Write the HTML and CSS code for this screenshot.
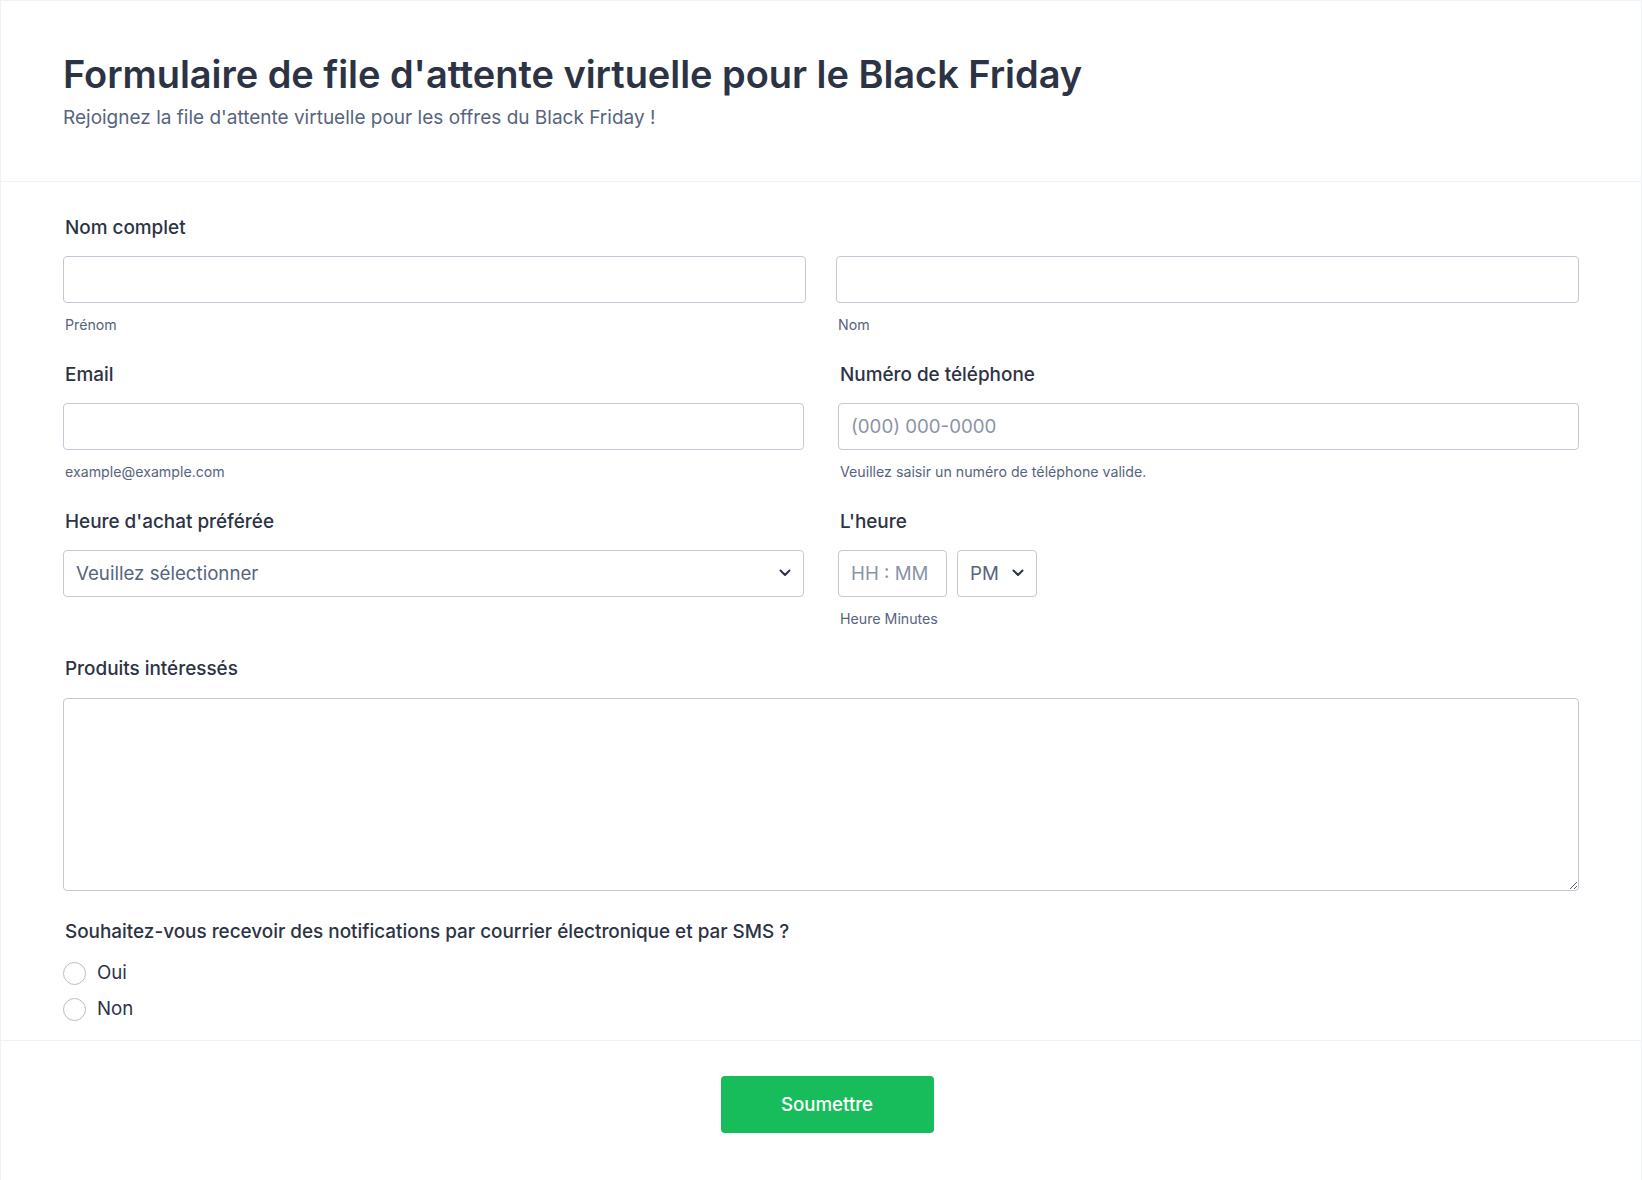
FILE: index.html
```html
<!DOCTYPE html>
<html lang="fr">
<head>
<meta charset="utf-8">
<title>Formulaire de file d'attente virtuelle pour le Black Friday</title>
<link rel="stylesheet" href="styles.css">
</head>
<body>
<div class="card">
  <header class="header">
    <h1 class="title">Formulaire de file d'attente virtuelle pour le Black Friday</h1>
    <p class="subtitle">Rejoignez la file d'attente virtuelle pour les offres du Black Friday !</p>
  </header>

  <section class="form">
    <div class="field">
      <div class="label">Nom complet</div>
      <div class="row row-name">
        <div class="col">
          <div class="input"></div>
          <div class="sublabel">Prénom</div>
        </div>
        <div class="col">
          <div class="input"></div>
          <div class="sublabel">Nom</div>
        </div>
      </div>
    </div>

    <div class="row">
      <div class="field">
        <div class="label">Email</div>
        <div class="input"></div>
        <div class="sublabel">example@example.com</div>
      </div>
      <div class="field">
        <div class="label">Numéro de téléphone</div>
        <div class="input"><span class="placeholder">(000) 000-0000</span></div>
        <div class="sublabel">Veuillez saisir un numéro de téléphone valide.</div>
      </div>
    </div>

    <div class="row">
      <div class="field">
        <div class="label">Heure d'achat préférée</div>
        <div class="input select"><span class="value">Veuillez sélectionner</span>
          <svg class="chev" width="12" height="8" viewBox="0 0 12 8"><path d="M1.5 1.5 L6 6 L10.5 1.5" fill="none" stroke="#2c3345" stroke-width="2" stroke-linecap="round" stroke-linejoin="round"/></svg>
        </div>
      </div>
      <div class="field">
        <div class="label">L'heure</div>
        <div class="time">
          <div class="input hhmm"><span class="placeholder">HH : MM</span></div>
          <div class="input select ampm"><span class="value">PM</span>
            <svg class="chev" width="12" height="8" viewBox="0 0 12 8"><path d="M1.5 1.5 L6 6 L10.5 1.5" fill="none" stroke="#2c3345" stroke-width="2" stroke-linecap="round" stroke-linejoin="round"/></svg>
          </div>
        </div>
        <div class="sublabel">Heure Minutes</div>
      </div>
    </div>

    <div class="field field-text">
      <div class="label">Produits intéressés</div>
      <textarea class="textarea"></textarea>
    </div>

    <div class="field field-last">
      <div class="label">Souhaitez-vous recevoir des notifications par courrier électronique et par SMS ?</div>
      <div class="radios">
        <div class="radio"><span class="circle"></span><span class="radio-text">Oui</span></div>
        <div class="radio"><span class="circle"></span><span class="radio-text">Non</span></div>
      </div>
    </div>
  </section>

  <footer class="footer">
    <button class="submit" type="button">Soumettre</button>
  </footer>
</div>
</body>
</html>
```

FILE: styles.css
```css
* { box-sizing: border-box; }
html, body {
  margin: 0;
  padding: 0;
  background: #ffffff;
}
body {
  font-family: Inter, "Noto Sans", sans-serif;
  color: #2c3345;
}
.card {
  width: 1642px;
  min-height: 1182px;
  border: 1px solid #f1f2f8;
  background: #fff;
}
.header {
  padding: 50px 62px 50px 62px;
  border-bottom: 1px solid #f0f1f8;
}
.title {
  margin: 0;
  font-size: 38px;
  line-height: 46px;
  font-weight: 600;
  color: #2c3345;
  letter-spacing: -0.05px;
}
.subtitle {
  margin: 8px 0 0 0;
  font-size: 19px;
  line-height: 26px;
  color: #57647e;
}
.form {
  padding: 34px 62px 13px 62px;
  display: flex;
  flex-direction: column;
  gap: 29px;
}
.row {
  display: grid;
  grid-template-columns: 1fr 1fr;
  column-gap: 34px;
}
.row-name {
  column-gap: 30px;
}
.field {
  display: flex;
  flex-direction: column;
}
.col {
  display: flex;
  flex-direction: column;
}
.label {
  font-size: 18.9px;
  line-height: 24px;
  font-weight: 500;
  color: #2c3345;
  padding-left: 2px;
  margin-bottom: 15.5px;
}
.input {
  height: 47px;
  border: 1px solid #c3c8d4;
  border-radius: 4px;
  background: #fff;
  display: flex;
  align-items: center;
  padding: 0 12px;
  font-size: 18.7px;
}
.placeholder {
  color: #8a93a8;
}
.value {
  color: #57647e;
}
.select {
  justify-content: space-between;
}
.sublabel {
  margin-top: 13.5px;
  font-size: 14.2px;
  line-height: 18px;
  color: #57647e;
  padding-left: 2px;
}
.time {
  display: flex;
  gap: 10px;
}
.hhmm {
  width: 109px;
}
.ampm {
  width: 80px;
  padding-right: 12px;
}
.field-text .label {
  margin-bottom: 16.5px;
}
.textarea {
  display: block;
  width: 100%;
  height: 193px;
  border: 1px solid #c3c8d4;
  border-radius: 4px;
  resize: vertical;
  font-family: inherit;
  font-size: 18.7px;
  padding: 12px;
  margin: 0;
}
.field-last .label {
  margin-bottom: 11.5px;
}
.radios {
  display: flex;
  flex-direction: column;
}
.radio {
  height: 36px;
  display: flex;
  align-items: center;
  gap: 11px;
}
.circle {
  width: 23px;
  height: 23px;
  border-radius: 50%;
  border: 1px solid #b8bdc9;
  background: #fff;
  flex: none;
}
.radio-text {
  font-size: 18.7px;
  line-height: 24px;
  color: #2c3345;
}
.footer {
  border-top: 1px solid #f0f1f8;
  padding: 35px 62px 40px 74px;
  display: flex;
  justify-content: center;
}
.submit {
  width: 213px;
  height: 57px;
  border: none;
  border-radius: 4px;
  background: #18bd5b;
  color: #fff;
  font-family: Inter, "Noto Sans", sans-serif;
  font-size: 18.7px;
  font-weight: 500;
}
```
